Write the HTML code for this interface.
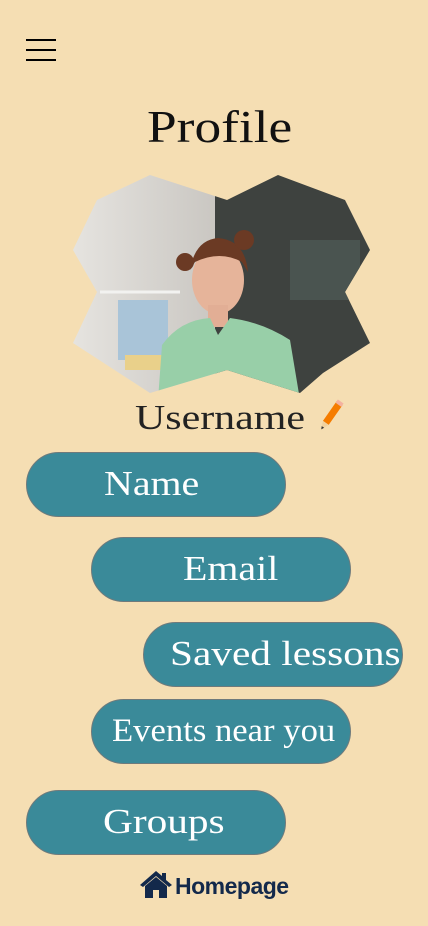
<!DOCTYPE html>
<html><head><meta charset="utf-8"><style>
body{margin:0;width:428px;height:926px;background:#f5deb3;position:relative;overflow:hidden;font-family:"Liberation Serif",serif}
.hb{position:absolute;left:26px;width:30px;height:1.5px;background:#000}
.t{position:absolute;left:147px;top:100px;font-size:46px;color:#111;transform:scaleX(1.16);transform-origin:left}
.b{position:absolute;width:258px;height:63px;border:1px solid #6e7a7c;border-radius:33px;background:#3a8a99;color:#fff;font-size:35px;line-height:62px;white-space:nowrap;box-sizing:content-box}
.b span{position:absolute;top:0;transform:scaleX(1.14);transform-origin:left}
</style></head><body>
<div class="hb" style="top:39px"></div><div class="hb" style="top:49px"></div><div class="hb" style="top:59px"></div>
<div class="t">Profile</div>
<svg style="position:absolute;left:0;top:0" width="428" height="440">
<defs>
<clipPath id="c"><polygon points="150,175 227,200 278,175 345,200 370,250 345,292 370,343 323,373 300,393 227,370 150,393 73,343 97,292 73,250 97,200"/></clipPath>
<linearGradient id="w" x1="0" y1="0" x2="1" y2="0"><stop offset="0" stop-color="#e8e6e2"/><stop offset="1" stop-color="#c9c6c1"/></linearGradient>
</defs>
<g clip-path="url(#c)">
<rect x="60" y="170" width="160" height="230" fill="url(#w)"/>
<rect x="215" y="170" width="160" height="230" fill="#3e423f"/>
<rect x="290" y="240" width="70" height="60" fill="#4a5450"/>
<line x1="100" y1="292" x2="180" y2="292" stroke="#f2f2f0" stroke-width="3"/>
<rect x="118" y="300" width="50" height="60" fill="#a9c4d8"/>
<rect x="125" y="355" width="40" height="15" fill="#e9d08a"/>
<ellipse cx="218" cy="280" rx="26" ry="34" fill="#e6b49a"/>
<path d="M190 270 Q195 240 218 238 Q245 240 248 272 L242 262 Q220 250 195 262Z" fill="#6b3a24"/>
<circle cx="185" cy="262" r="9" fill="#6b3a24"/><circle cx="244" cy="240" r="10" fill="#6b3a24"/>
<rect x="208" y="305" width="20" height="22" fill="#e2ae95"/>
<path d="M158 400 L162 345 Q180 320 210 318 L218 335 L230 318 Q262 322 290 340 L300 400Z" fill="#98cfa8"/>
</g>
<text x="135" y="429" font-family="Liberation Serif, serif" font-size="35" fill="#222" textLength="170" lengthAdjust="spacingAndGlyphs">Username</text>
<g transform="translate(330,416) rotate(35)"><rect x="-3" y="-16" width="7" height="24" fill="#f57c00"/><rect x="-3" y="-18" width="7" height="4" fill="#f3b2a0"/><polygon points="-3,8 4,8 0.5,16" fill="#f0d2a0"/><polygon points="-1,13 2,13 0.5,16" fill="#333"/></g>
</svg>
<div class="b" style="left:26px;top:452px"><span style="left:77px">Name</span></div>
<div class="b" style="left:91px;top:537px"><span style="left:91px">Email</span></div>
<div class="b" style="left:143px;top:622px"><span style="left:26px;transform:scaleX(1.18)">Saved lessons</span></div>
<div class="b" style="left:91px;top:699px;font-size:33px"><span style="left:20px;transform:scaleX(1.05)">Events near you</span></div>
<div class="b" style="left:26px;top:790px"><span style="left:76px;transform:scaleX(1.18)">Groups</span></div>
<svg style="position:absolute;left:139px;top:870px" width="34" height="28" viewBox="0 0 34 28"><path d="M17 1 L1 15 L4 17 L17 6 L30 17 L33 15 L27 10 L27 3 L23 3 L23 6Z M6 16 L6 28 L14 28 L14 20 L20 20 L20 28 L28 28 L28 16 L17 7Z" fill="#13294b"/></svg>
<div style="position:absolute;left:175px;top:873px;font-family:'Liberation Sans',sans-serif;font-weight:bold;font-size:23px;color:#13294b;letter-spacing:-0.5px">Homepage</div>
</body></html>
